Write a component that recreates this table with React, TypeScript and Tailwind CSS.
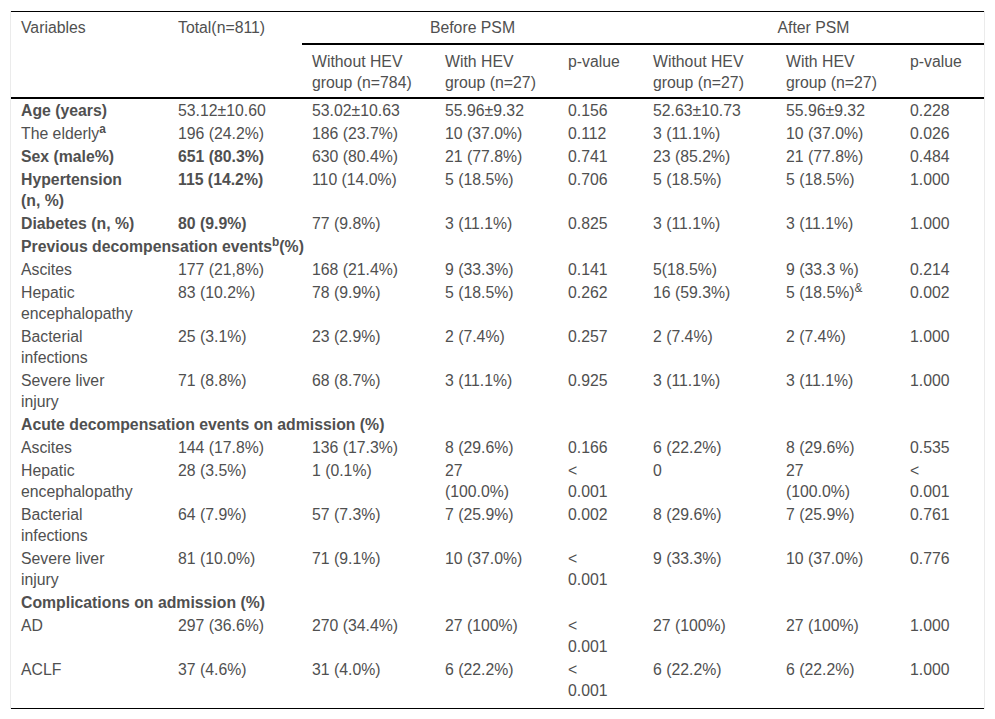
import React from 'react';

type Cell = React.ReactNode;
type Row =
  | { kind: 'section'; label: Cell }
  | { kind: 'data'; cells: Cell[]; bold?: number[] };

// column widths, left to right
const cols = ['w-[157px]', 'w-[134px]', 'w-[133px]', 'w-[123px]', 'w-[85px]', 'w-[133px]', 'w-[124px]', 'w-[84px]'];

const rows: Row[] = [
  { kind: 'data', bold: [0], cells: ['Age (years)', '53.12±10.60', '53.02±10.63', '55.96±9.32', '0.156', '52.63±10.73', '55.96±9.32', '0.228'] },
  {
    kind: 'data',
    cells: [
      <>The elderly<sup className="font-bold">a</sup></>,
      '196 (24.2%)', '186 (23.7%)', '10 (37.0%)', '0.112', '3 (11.1%)', '10 (37.0%)', '0.026',
    ],
  },
  { kind: 'data', bold: [0, 1], cells: ['Sex (male%)', '651 (80.3%)', '630 (80.4%)', '21 (77.8%)', '0.741', '23 (85.2%)', '21 (77.8%)', '0.484'] },
  { kind: 'data', bold: [0, 1], cells: ['Hypertension\n(n, %)', '115 (14.2%)', '110 (14.0%)', '5 (18.5%)', '0.706', '5 (18.5%)', '5 (18.5%)', '1.000'] },
  { kind: 'data', bold: [0, 1], cells: ['Diabetes (n, %)', '80 (9.9%)', '77 (9.8%)', '3 (11.1%)', '0.825', '3 (11.1%)', '3 (11.1%)', '1.000'] },
  { kind: 'section', label: <>Previous decompensation events<sup>b</sup>(%)</> },
  { kind: 'data', cells: ['Ascites', '177 (21,8%)', '168 (21.4%)', '9 (33.3%)', '0.141', '5(18.5%)', '9 (33.3 %)', '0.214'] },
  {
    kind: 'data',
    cells: [
      'Hepatic\nencephalopathy', '83 (10.2%)', '78 (9.9%)', '5 (18.5%)', '0.262', '16 (59.3%)',
      <>5 (18.5%)<sup>&amp;</sup></>,
      '0.002',
    ],
  },
  { kind: 'data', cells: ['Bacterial\ninfections', '25 (3.1%)', '23 (2.9%)', '2 (7.4%)', '0.257', '2 (7.4%)', '2 (7.4%)', '1.000'] },
  { kind: 'data', cells: ['Severe liver\ninjury', '71 (8.8%)', '68 (8.7%)', '3 (11.1%)', '0.925', '3 (11.1%)', '3 (11.1%)', '1.000'] },
  { kind: 'section', label: 'Acute decompensation events on admission (%)' },
  { kind: 'data', cells: ['Ascites', '144 (17.8%)', '136 (17.3%)', '8 (29.6%)', '0.166', '6 (22.2%)', '8 (29.6%)', '0.535'] },
  { kind: 'data', cells: ['Hepatic\nencephalopathy', '28 (3.5%)', '1 (0.1%)', '27\n(100.0%)', '<\n0.001', '0', '27\n(100.0%)', '<\n0.001'] },
  { kind: 'data', cells: ['Bacterial\ninfections', '64 (7.9%)', '57 (7.3%)', '7 (25.9%)', '0.002', '8 (29.6%)', '7 (25.9%)', '0.761'] },
  { kind: 'data', cells: ['Severe liver\ninjury', '81 (10.0%)', '71 (9.1%)', '10 (37.0%)', '<\n0.001', '9 (33.3%)', '10 (37.0%)', '0.776'] },
  { kind: 'section', label: 'Complications on admission (%)' },
  { kind: 'data', cells: ['AD', '297 (36.6%)', '270 (34.4%)', '27 (100%)', '<\n0.001', '27 (100%)', '27 (100%)', '1.000'] },
  { kind: 'data', cells: ['ACLF', '37 (4.6%)', '31 (4.0%)', '6 (22.2%)', '<\n0.001', '6 (22.2%)', '6 (22.2%)', '1.000'] },
];

function Lines({ value }: { value: Cell }) {
  if (typeof value !== 'string') return <>{value}</>;
  const parts = value.split('\n');
  return (
    <>
      {parts.map((p, i) => (
        <React.Fragment key={i}>
          {i > 0 && <br />}
          {p}
        </React.Fragment>
      ))}
    </>
  );
}

export default function App() {
  const cellBase = 'pl-[10px] pr-[4px] align-top whitespace-nowrap text-left leading-[21px]';

  return (
    <div className="min-h-screen bg-white pt-[11px] pl-[10px] font-['Liberation_Sans',Arial,sans-serif] text-[15.8px] text-[#505050]">
      <div className="w-[975px] border-x border-[#ebebeb]">
        <table className="w-[973px] table-fixed border-separate border-spacing-0 border-t border-black">
          <colgroup>
            {cols.map((c, i) => (
              <col key={i} className={c} />
            ))}
          </colgroup>
          <thead>
            <tr>
              <th rowSpan={2} className={`${cellBase} font-normal pt-[5px] border-b-2 border-black`}>
                Variables
              </th>
              <th rowSpan={2} className={`${cellBase} font-normal pt-[5px] border-b-2 border-black`}>
                Total(n=811)
              </th>
              <th colSpan={3} className="font-normal text-center leading-[21px] pt-[5px] pb-[5px] border-b-2 border-black">
                Before PSM
              </th>
              <th colSpan={3} className="font-normal text-center leading-[21px] pt-[5px] pb-[5px] border-b-2 border-black">
                After PSM
              </th>
            </tr>
            <tr>
              {['Without HEV\ngroup (n=784)', 'With HEV\ngroup (n=27)', 'p-value', 'Without HEV\ngroup (n=27)', 'With HEV\ngroup (n=27)', 'p-value'].map(
                (h, i) => (
                  <th key={i} className={`${cellBase} font-normal pt-[6px] pb-[4px] border-b-2 border-black`}>
                    <Lines value={h} />
                  </th>
                ),
              )}
            </tr>
          </thead>
          <tbody>
            {rows.map((row, ri) => {
              const last = ri === rows.length - 1;
              const pad = last ? 'pt-[1px] pb-[7px] border-b border-black' : 'py-[1px]';
              if (row.kind === 'section') {
                return (
                  <tr key={ri}>
                    <td colSpan={8} className={`${cellBase} ${pad} font-bold`}>
                      {row.label}
                    </td>
                  </tr>
                );
              }
              return (
                <tr key={ri}>
                  {row.cells.map((c, ci) => (
                    <td key={ci} className={`${cellBase} ${pad} ${row.bold?.includes(ci) ? 'font-bold' : ''}`}>
                      <Lines value={c} />
                    </td>
                  ))}
                </tr>
              );
            })}
          </tbody>
        </table>
      </div>
    </div>
  );
}
